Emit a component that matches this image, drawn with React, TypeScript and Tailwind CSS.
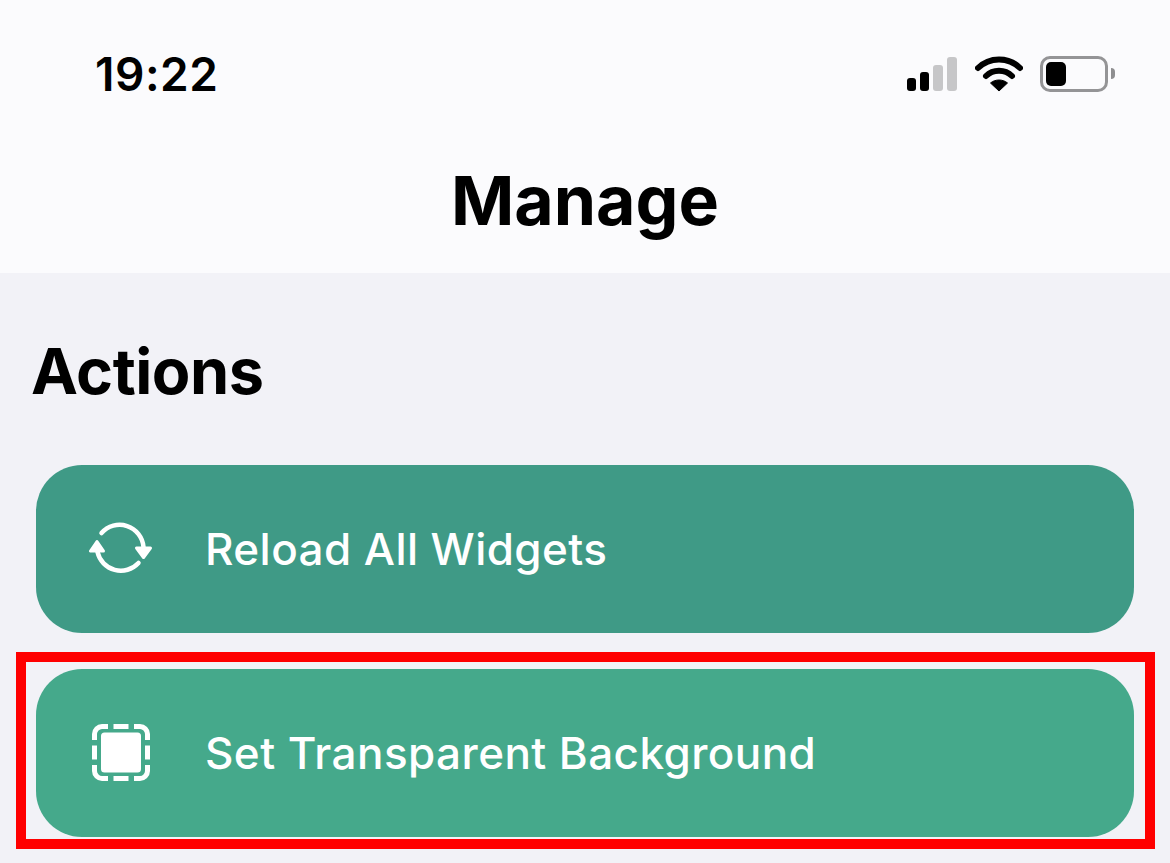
import { type ReactNode } from 'react'

function StatusIcons() {
  return (
    <div className="flex items-center">
      <svg width="52" height="36" viewBox="0 0 52 36" className="mr-[17px]">
        <rect x="1" y="22" width="9" height="13" rx="3" fill="#000" />
        <rect x="14" y="16" width="9" height="19" rx="3" fill="#000" />
        <rect x="27" y="9" width="10" height="26" rx="3" fill="#c6c6c8" />
        <rect x="41" y="1" width="10" height="34" rx="3" fill="#c6c6c8" />
      </svg>
      <svg width="48" height="38" viewBox="0 0 48 38" className="mr-[17px]">
        <path d="M3 13 C14.5 1.5 33.5 1.5 45 13" fill="none" stroke="#000" strokeWidth="6" strokeLinecap="round" />
        <path d="M11 21 C18 14 30 14 37 21" fill="none" stroke="#000" strokeWidth="6" strokeLinecap="round" />
        <path d="M24 36 L15.5 28 C20 24 28 24 32.5 28 Z" fill="#000" stroke="#000" strokeWidth="1" strokeLinejoin="round" />
      </svg>
      <div className="relative h-[36px] w-[68px] rounded-[10px] border-[3px] border-[#949496] p-[3px]">
        <div className="h-full w-[20px] rounded-[5px] bg-black" />
        <div className="absolute top-[9px] -right-[10px] h-[11px] w-[4px] rounded-r-[5px] bg-[#8e8e90]" />
      </div>
    </div>
  )
}

function ReloadIcon() {
  return (
    <svg width="64" height="56" viewBox="0 0 64 56" fill="none">
      <path d="M12.5 12 A24 24 0 0 1 54.5 26" stroke="#fff" strokeWidth="4.5" strokeLinecap="round" />
      <path d="M47.5 27 H61.5 L54.5 36.5 Z" fill="#fff" stroke="#fff" strokeWidth="3" strokeLinejoin="round" />
      <path d="M49.5 42 A24 24 0 0 1 8.5 31" stroke="#fff" strokeWidth="4.5" strokeLinecap="round" />
      <path d="M1.5 30 H14.5 L8 20.5 Z" fill="#fff" stroke="#fff" strokeWidth="3" strokeLinejoin="round" />
    </svg>
  )
}

function TransparentIcon() {
  return (
    <svg width="58" height="58" viewBox="0 0 58 58" fill="none">
      <rect x="9" y="8.5" width="40" height="40" rx="3.5" fill="#fff" />
      <g stroke="#fff" strokeWidth="5">
        <path d="M2.5 16 V10 C2.5 6 6 2.5 10 2.5 H16" />
        <path d="M21.5 2.5 H36.5" />
        <path d="M42 2.5 H48 C52 2.5 55.5 6 55.5 10 V16" />
        <path d="M2.5 21.5 V35.5" />
        <path d="M55.5 21.5 V35.5" />
        <path d="M2.5 41 V47 C2.5 51 6 54.5 10 54.5 H16" />
        <path d="M21.5 54.5 H36.5" />
        <path d="M42 54.5 H48 C52 54.5 55.5 51 55.5 47 V41" />
      </g>
    </svg>
  )
}

function ActionButton({ icon, label, color }: { icon: ReactNode; label: string; color: string }) {
  return (
    <div className={`flex h-[168px] items-center rounded-[46px] ${color}`}>
      <div className="flex w-[169px] shrink-0 justify-center">{icon}</div>
      <span className="text-[44px] font-medium tracking-[0.43px] text-white">{label}</span>
    </div>
  )
}

export default function App() {
  return (
    <div className="h-[863px] w-[1170px] overflow-hidden bg-[#f2f2f7] font-['Inter',sans-serif] text-black">
      <header className="h-[273px] bg-[#fbfbfd]">
        <div className="flex h-[150px] items-center justify-between pr-[62px] pl-[95px] pb-[2px]">
          <span className="text-[46px] font-semibold tracking-[0.5px]">19:22</span>
          <StatusIcons />
        </div>
        <h1 className="text-center text-[68px] leading-[100px] font-bold tracking-[0px]">Manage</h1>
      </header>
      <main className="px-[36px]">
        <h2 className="-ml-[5px] pt-[60px] pb-[56px] text-[63px] leading-[76px] font-bold tracking-[-0.5px]">Actions</h2>
        <ActionButton icon={<ReloadIcon />} label="Reload All Widgets" color="bg-[#3f9a86]" />
        <div className="relative mt-[36px]">
          <ActionButton icon={<TransparentIcon />} label="Set Transparent Background" color="bg-[#45a98b]" />
          <div className="absolute -top-[17px] -right-[21px] -bottom-[12px] -left-[20px] border-[10px] border-[#ff0000]" />
        </div>
      </main>
    </div>
  )
}
